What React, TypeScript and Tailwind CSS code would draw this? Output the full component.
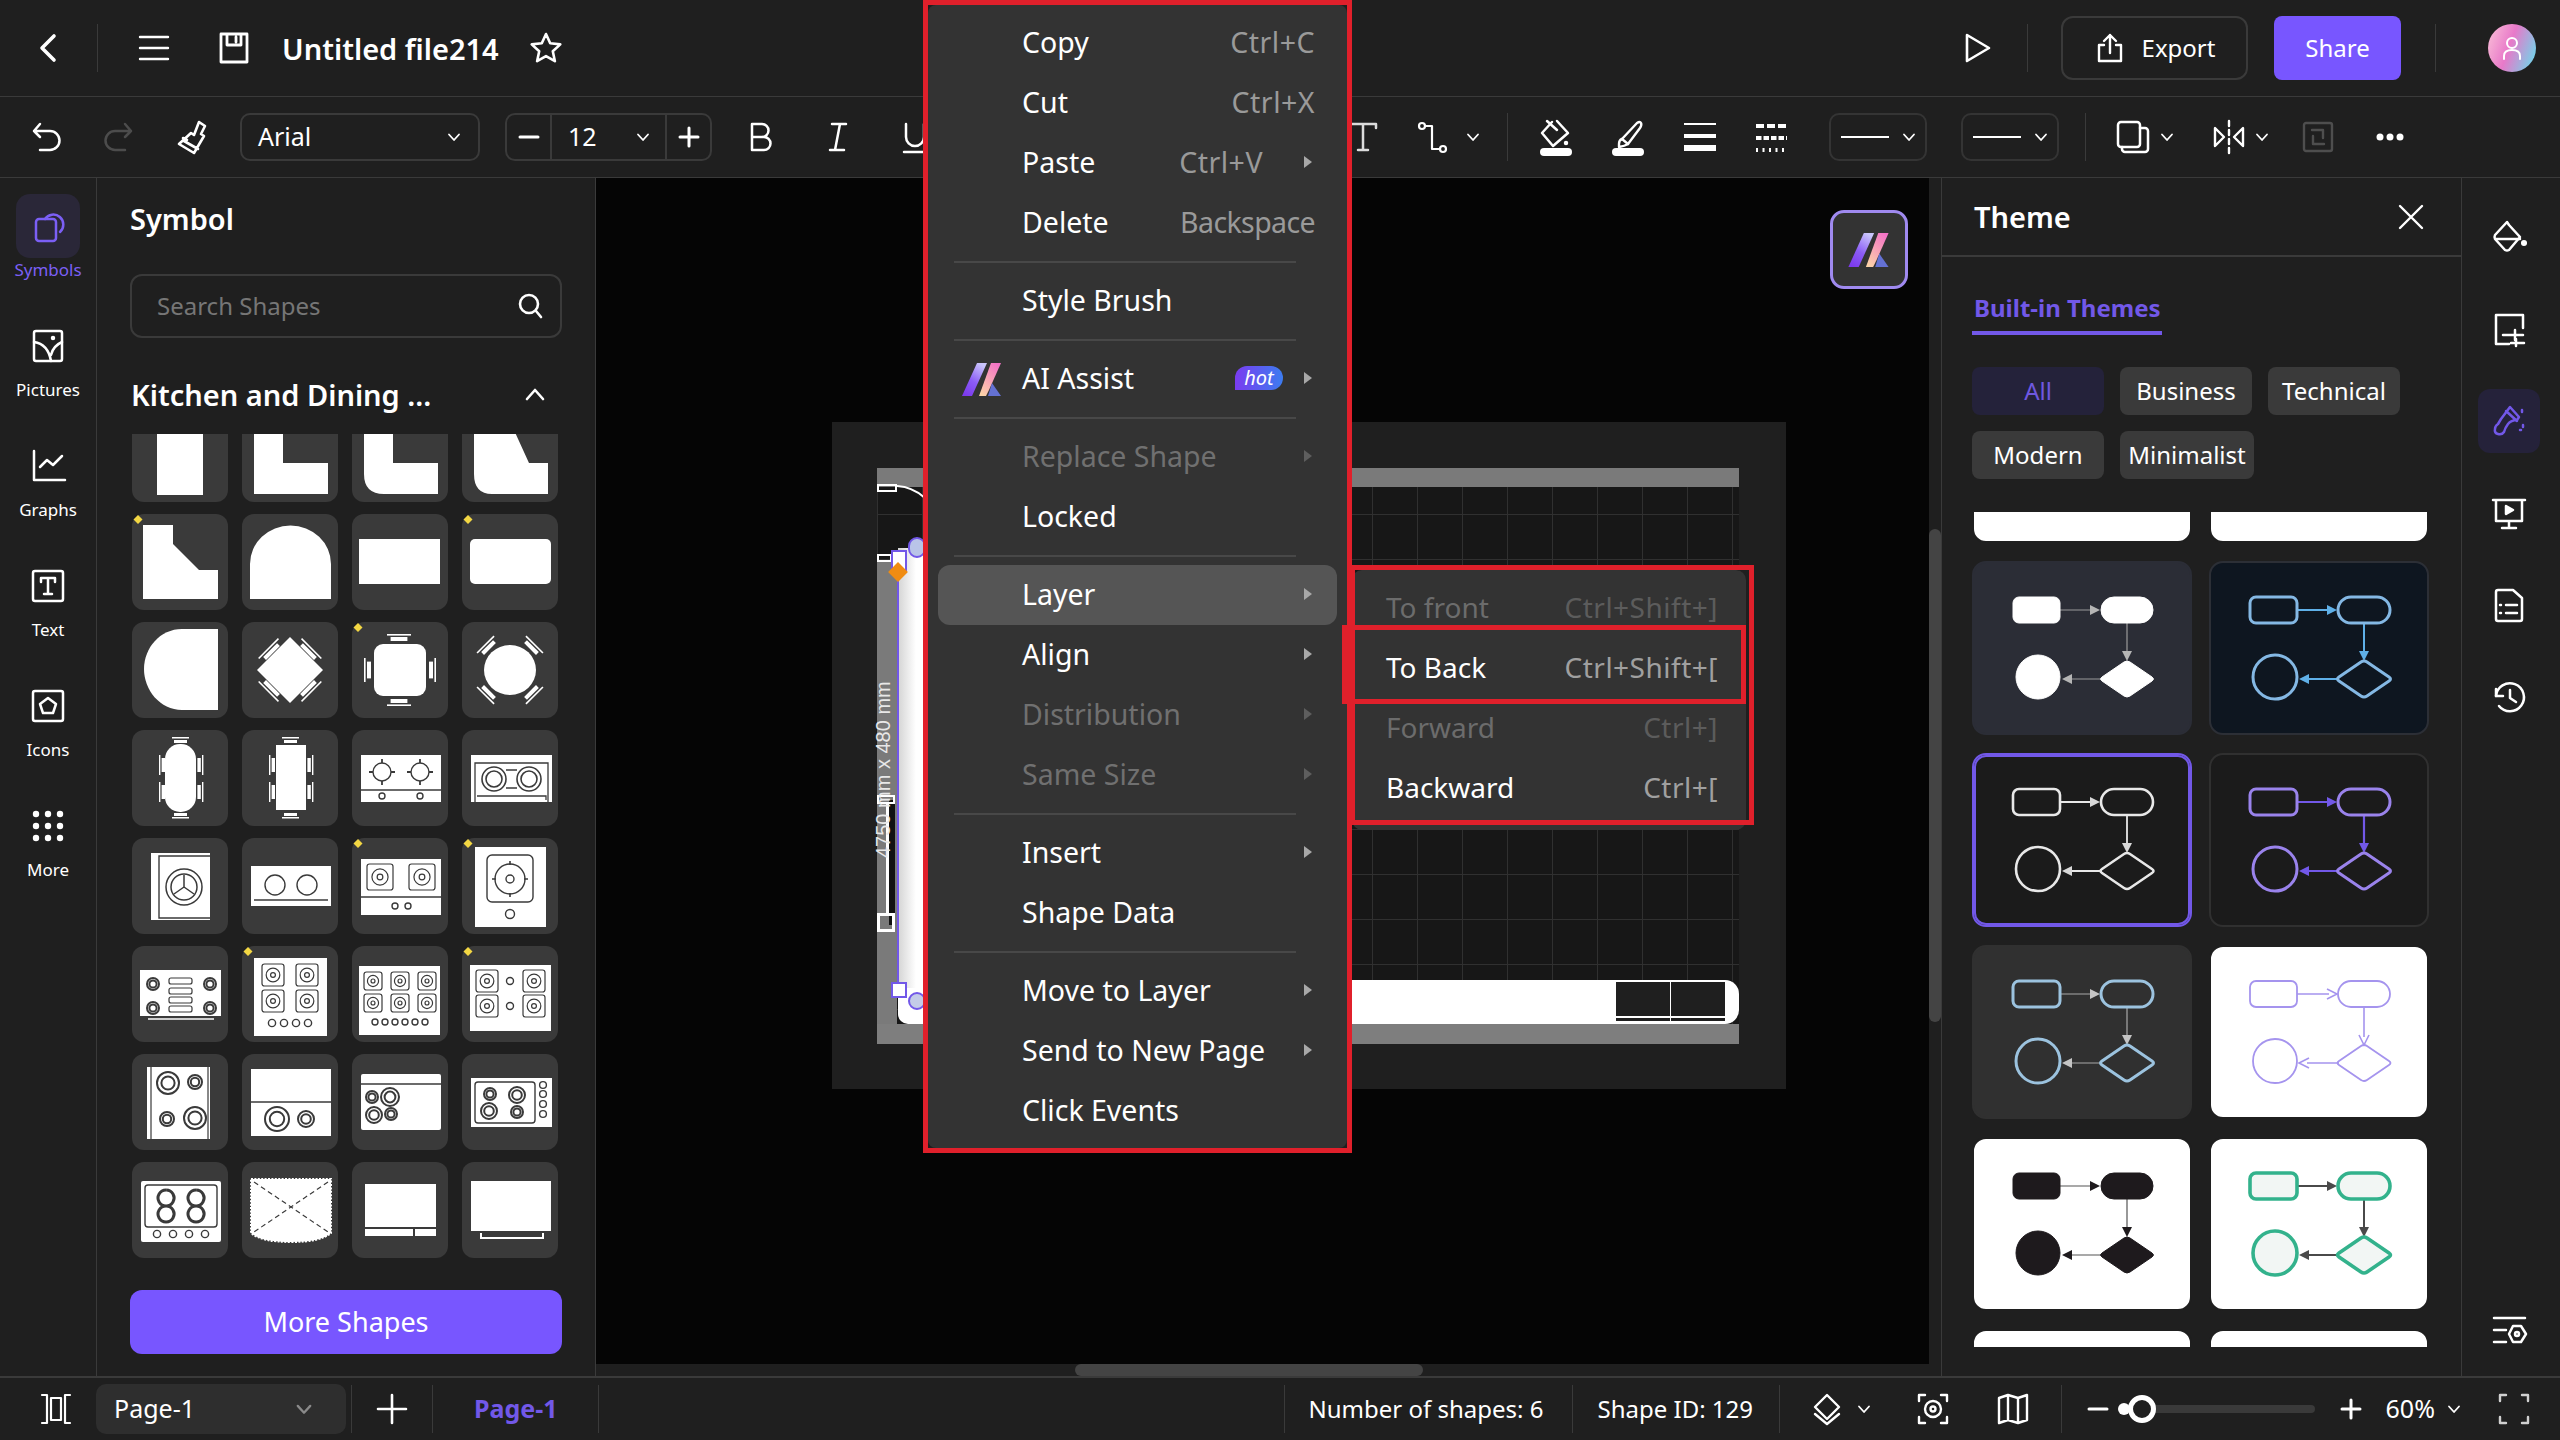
import type { ReactNode } from 'react'

const RED = 'border-[#e0202b]'

function Ico({ size = 36, box = 36, sw = 2.5, className = '', children }: { size?: number; box?: number; sw?: number; className?: string; children: ReactNode }) {
  return (
    <svg width={size} height={size} viewBox={`0 0 ${box} ${box}`} fill="none" stroke="currentColor" strokeWidth={sw} strokeLinecap="round" strokeLinejoin="round" className={`shrink-0 overflow-visible ${className}`}>
      {children}
    </svg>
  )
}

const Chev = ({ className = '', size = 16 }: { className?: string; size?: number }) => (
  <Ico size={size} box={16} sw={1.8} className={className}><path d="M3 5.5 8 11l5-5.5" /></Ico>
)

const Sep = ({ className = '' }: { className?: string }) => <div className={`w-px h-[48px] bg-[#3a3a3a] shrink-0 ${className}`} />

function AiLogo({ w = 40, h = 33, id }: { w?: number; h?: number; id: string }) {
  return (
    <svg width={w} height={h} viewBox="0 0 40 33" className="shrink-0">
      <defs>
        <linearGradient id={`${id}a`} x1="0.7" y1="0" x2="0.2" y2="1"><stop offset="0" stopColor="#c9c4fb" /><stop offset="0.55" stopColor="#8b5cf6" /><stop offset="1" stopColor="#7c3aed" /></linearGradient>
        <linearGradient id={`${id}b`} x1="0.8" y1="0" x2="0.2" y2="1"><stop offset="0" stopColor="#f472c6" /><stop offset="1" stopColor="#fcd2a8" /></linearGradient>
      </defs>
      <path d="M15 0h10L10 33H0z" fill={`url(#${id}a)`} />
      <path d="M29 0h10L27 27l-3 6h-7z" fill={`url(#${id}b)`} />
      <path d="M30 20l9 13H26z" fill="#6d7cf0" opacity="0.85" />
    </svg>
  )
}

/* ---------- shape tiles ---------- */

const D = '#3a3a3a'

const Ring = ({ x, y, r, sw = 1.4, inner }: { x: number; y: number; r: number; sw?: number; inner?: number }) => (
  <g fill="none" stroke={D} strokeWidth={sw}>
    <circle cx={x} cy={y} r={r} />
    {inner ? <circle cx={x} cy={y} r={inner} /> : null}
  </g>
)

const Burner = ({ x, y, s = 11 }: { x: number; y: number; s?: number }) => (
  <g fill="none" stroke={D} strokeWidth={1.2}>
    <rect x={x - s} y={y - s} width={s * 2} height={s * 2} rx={2.5} />
    <circle cx={x} cy={y} r={s * 0.62} />
    <circle cx={x} cy={y} r={s * 0.22} />
  </g>
)

const Chair = ({ x, y, a, l = 12 }: { x: number; y: number; a: number; l?: number }) => (
  <g transform={`rotate(${a} ${x} ${y})`} fill="#fff">
    <rect x={x - l} y={y} width={l * 2} height={1.6} />
    <rect x={x - l * 0.7} y={y + 3} width={l * 1.4} height={4} />
  </g>
)

const Side = ({ x, y, dir }: { x: number; y: number; dir: 1 | -1 }) => (
  <g fill="#fff">
    <rect x={x} y={y - 10} width={1.4} height={20} />
    <rect x={dir > 0 ? x + 2.6 : x - 4.6} y={y - 7} width={3.4} height={14} />
  </g>
)

const Pair = ({ x, y, s = 8 }: { x: number; y: number; s?: number }) => <Ring x={x} y={y} r={s} sw={2} inner={s * 0.6} />

const TILES: { yellow?: boolean; art: ReactNode }[] = [
  { art: <rect x={25} y={0} width={46} height={89} fill="#fff" /> },
  { art: <path d="M12 0h29v57h45v31H12z" fill="#fff" /> },
  { art: <path d="M12 0h29v57h45v31H32Q12 88 12 68z" fill="#fff" /> },
  { art: <path d="M12 0h29l26 57h19v31H30Q12 88 12 68z" fill="#fff" /> },

  { yellow: true, art: <path d="M11 11h30v19l26 26h19v29H11z" fill="#fff" /> },
  { art: <path d="M8 85V50a40 38 0 0 1 81 0v35z" fill="#fff" /> },
  { art: <rect x={7} y={25} width={81} height={45} fill="#fff" /> },
  { yellow: true, art: <rect x={8} y={25} width={81} height={45} rx={5} fill="#fff" /> },

  { art: <path d="M86 7v81H50C28 88 12 68 12 47S28 7 50 7z" fill="#fff" /> },
  {
    art: (
      <g>
        <path d="M48 15l33 33-33 33-33-33z" fill="#fff" />
        <Chair x={26} y={26} a={-45} l={14} />
        <Chair x={70} y={26} a={45} l={14} />
        <Chair x={70} y={70} a={135} l={14} />
        <Chair x={26} y={70} a={225} l={14} />
      </g>
    ),
  },
  {
    yellow: true,
    art: (
      <g>
        <rect x={22} y={22} width={52} height={52} rx={9} fill="#fff" />
        <Chair x={47} y={12} a={0} />
        <Chair x={47} y={84} a={180} />
        <Chair x={12} y={48} a={-90} />
        <Chair x={84} y={48} a={90} />
      </g>
    ),
  },
  {
    art: (
      <g>
        <ellipse cx={48} cy={48} rx={26} ry={25} fill="#fff" />
        <Chair x={23} y={22} a={-45} />
        <Chair x={73} y={22} a={45} />
        <Chair x={73} y={74} a={135} />
        <Chair x={23} y={74} a={225} />
      </g>
    ),
  },

  {
    art: (
      <g>
        <rect x={33} y={14} width={31} height={68} rx={15} fill="#fff" />
        <rect x={40} y={7} width={17} height={1.5} fill="#fff" /><rect x={42} y={10} width={13} height={3} fill="#fff" />
        <rect x={40} y={87} width={17} height={1.5} fill="#fff" /><rect x={42} y={83} width={13} height={3} fill="#fff" />
        <Side x={27} y={35} dir={1} /><Side x={27} y={62} dir={1} />
        <Side x={70} y={35} dir={-1} /><Side x={70} y={62} dir={-1} />
      </g>
    ),
  },
  {
    art: (
      <g>
        <rect x={34} y={15} width={30} height={65} fill="#fff" />
        <rect x={40} y={7} width={17} height={1.5} fill="#fff" /><rect x={42} y={10} width={13} height={3} fill="#fff" />
        <rect x={40} y={87} width={17} height={1.5} fill="#fff" /><rect x={42} y={83} width={13} height={3} fill="#fff" />
        <Side x={27} y={35} dir={1} /><Side x={27} y={62} dir={1} />
        <Side x={70} y={35} dir={-1} /><Side x={70} y={62} dir={-1} />
      </g>
    ),
  },
  {
    art: (
      <g>
        <rect x={9} y={25} width={80} height={47} fill="#fff" />
        <path d="M9 60h80" stroke={D} strokeWidth={1.4} />
        <Ring x={30} y={42} r={9} /><Ring x={68} y={42} r={9} />
        <path d="M30 29v4M30 51v4M17 42h4M39 42h4M68 29v4M68 51v4M55 42h4M77 42h4" stroke={D} strokeWidth={1.8} />
        <Ring x={30} y={66} r={3} /><Ring x={68} y={66} r={3} />
      </g>
    ),
  },
  {
    art: (
      <g>
        <rect x={9} y={25} width={81} height={47} fill="#fff" />
        <path d="M13 72V33h73v39M15 66h69v4" fill="none" stroke={D} strokeWidth={1.3} />
        <Ring x={32} y={49} r={12} sw={1.6} inner={8} /><Ring x={67} y={49} r={12} sw={1.6} inner={8} />
        <path d="M44 40h11M44 58h11" stroke={D} strokeWidth={1.3} />
      </g>
    ),
  },

  {
    art: (
      <g>
        <rect x={19} y={15} width={59} height={67} fill="#fff" />
        <path d="M78 18H27v62h51" fill="none" stroke={D} strokeWidth={1.4} />
        <Ring x={52} y={49} r={18} sw={1.5} inner={13} />
        <path d="M52 49v-12M52 49l-10 7M52 49l10 7" stroke={D} strokeWidth={1.5} />
      </g>
    ),
  },
  {
    art: (
      <g>
        <rect x={9} y={28} width={80} height={40} fill="#fff" />
        <Ring x={33} y={47} r={10} /><Ring x={65} y={47} r={10} />
        <path d="M12 62h74" stroke={D} strokeWidth={1.4} />
      </g>
    ),
  },
  {
    yellow: true,
    art: (
      <g>
        <rect x={9} y={21} width={80} height={56} fill="#fff" />
        <Burner x={28} y={39} s={13} /><Burner x={70} y={39} s={13} />
        <path d="M9 59h80" stroke={D} strokeWidth={1.4} />
        <Ring x={43} y={68} r={3} /><Ring x={56} y={68} r={3} />
      </g>
    ),
  },
  {
    yellow: true,
    art: (
      <g>
        <rect x={13} y={9} width={71} height={80} fill="#fff" />
        <rect x={25} y={17} width={46} height={47} rx={5} fill="none" stroke={D} strokeWidth={1.4} />
        <Ring x={48} y={41} r={15} /><Ring x={48} y={41} r={4} />
        <path d="M48 23v4M48 55v4M30 41h4M62 41h4" stroke={D} strokeWidth={1.6} />
        <Ring x={48} y={76} r={4.5} />
      </g>
    ),
  },

  {
    art: (
      <g>
        <rect x={8} y={24} width={81} height={46} fill="#fff" />
        <path d="M16 73h66" stroke="#fff" strokeWidth={1.4} />
        <Pair x={21} y={38} s={6} /><Pair x={78} y={38} s={6} /><Pair x={21} y={62} s={6} /><Pair x={78} y={62} s={6} />
        <g fill="none" stroke={D} strokeWidth={1.2}>
          <rect x={37} y={32} width={23} height={6} rx={2} /><rect x={37} y={42} width={23} height={6} rx={2} /><rect x={37} y={51} width={23} height={6} rx={2} /><rect x={37} y={60} width={23} height={6} rx={2} />
        </g>
      </g>
    ),
  },
  {
    yellow: true,
    art: (
      <g>
        <rect x={12} y={12} width={73} height={78} fill="#fff" />
        <Burner x={31} y={29} /><Burner x={65} y={29} /><Burner x={31} y={55} /><Burner x={65} y={55} />
        <Ring x={30} y={77} r={3.6} /><Ring x={42} y={77} r={3.6} /><Ring x={54} y={77} r={3.6} /><Ring x={66} y={77} r={3.6} />
      </g>
    ),
  },
  {
    art: (
      <g>
        <rect x={7} y={20} width={81} height={69} fill="#fff" />
        <Burner x={21} y={35} s={9} /><Burner x={48} y={35} s={9} /><Burner x={75} y={35} s={9} />
        <Burner x={21} y={57} s={9} /><Burner x={48} y={57} s={9} /><Burner x={75} y={57} s={9} />
        {[23, 33, 43, 53, 63, 73].map(x => <Ring key={x} x={x} y={76} r={3} />)}
      </g>
    ),
  },
  {
    yellow: true,
    art: (
      <g>
        <rect x={8} y={19} width={81} height={66} fill="#fff" />
        <Burner x={25} y={35} /><Burner x={72} y={35} /><Burner x={25} y={60} /><Burner x={72} y={60} />
        <Ring x={48} y={35} r={3.5} /><Ring x={48} y={60} r={3.5} />
      </g>
    ),
  },

  {
    art: (
      <g>
        <rect x={15} y={13} width={63} height={72} fill="#fff" />
        <path d="M19 13v72M76 13v72" stroke={D} strokeWidth={1.2} />
        <Pair x={36} y={29} s={11} /><Pair x={63} y={28} s={7} /><Pair x={35} y={65} s={7} /><Pair x={63} y={64} s={11} />
      </g>
    ),
  },
  {
    art: (
      <g>
        <rect x={9} y={15} width={80} height={67} fill="#fff" />
        <path d="M9 48h80" stroke={D} strokeWidth={1.5} />
        <Pair x={35} y={65} s={12} /><Pair x={64} y={65} s={8} />
      </g>
    ),
  },
  {
    art: (
      <g>
        <rect x={9} y={20} width={80} height={56} rx={2} fill="#fff" />
        <path d="M9 30h80" stroke={D} strokeWidth={1.5} />
        <Pair x={20} y={43} s={6} /><Pair x={38} y={43} s={9} /><Pair x={22} y={61} s={8} /><Pair x={39} y={60} s={6} />
      </g>
    ),
  },
  {
    art: (
      <g>
        <rect x={9} y={24} width={81} height={49} fill="#fff" />
        <rect x={13} y={28} width={60} height={41} rx={3} fill="none" stroke={D} strokeWidth={1.4} />
        <Pair x={28} y={40} s={6} /><Pair x={55} y={41} s={8} /><Pair x={27} y={57} s={8} /><Pair x={55} y={58} s={6} />
        {[33, 42, 52, 62].map(y => <Ring key={y} x={81} y={y - 2} r={3.4} />)}
      </g>
    ),
  },

  {
    art: (
      <g>
        <rect x={9} y={19} width={80} height={61} rx={2} fill="#fff" />
        <rect x={13} y={23} width={72} height={42} rx={3} fill="none" stroke={D} strokeWidth={1.4} />
        <path d="M34 28a8 8 0 1 0 .1 0M34 44a8 8 0 1 0 .1 0M64 28a8 8 0 1 0 .1 0M64 44a8 8 0 1 0 .1 0" fill="none" stroke={D} strokeWidth={3} />
        {[25, 41, 57, 73].map(x => <Ring key={x} x={x} y={72} r={3.6} />)}
      </g>
    ),
  },
  {
    art: (
      <g>
        <path d="M9 17h80v54q-10 9-40 9t-40-9z" fill="#fff" stroke="#fff" strokeDasharray="2 1.4" strokeWidth={2} />
        <path d="M12 20l74 50M86 20 12 70" stroke={D} strokeWidth={1.2} strokeDasharray="5 3.4" />
      </g>
    ),
  },
  {
    art: (
      <g>
        <rect x={13} y={22} width={71} height={43} fill="#fff" />
        <rect x={13} y={67} width={48} height={7} fill="#fff" />
        <rect x={63} y={67} width={21} height={7} fill="#fff" />
      </g>
    ),
  },
  {
    art: (
      <g>
        <rect x={9} y={19} width={80} height={50} fill="#fff" />
        <path d="M19 71v5h62v-5" fill="none" stroke="#fff" strokeWidth={2} />
      </g>
    ),
  },
]

function Tile({ art, yellow }: { art: ReactNode; yellow?: boolean }) {
  return (
    <div className="w-[96px] h-[96px] rounded-[12px] bg-[#3a3a3a]">
      <svg width={96} height={96} viewBox="0 0 96 96" className="block overflow-visible">
        {art}
        {yellow ? <path d="M6 1l4.5 4.5L6 10 1.500 5.500z" fill="#f3d743" /> : null}
      </svg>
    </div>
  )
}

/* ---------- theme cards ---------- */

type Flow = { bg: string; border: string; stroke: string; fill: string; line: string; head: string; sw: number; lw?: number; open?: boolean }

const THEMES: Flow[] = [
  { bg: 'bg-white', border: 'border-[#1f1f1f]', stroke: 'none', fill: 'none', line: 'none', head: 'none', sw: 0 },
  { bg: 'bg-white', border: 'border-[#1f1f1f]', stroke: 'none', fill: 'none', line: 'none', head: 'none', sw: 0 },
  { bg: 'bg-[#2b2d36]', border: 'border-[#2b2d36]', stroke: '#fff', fill: '#fff', line: '#9a9a9a', head: '#b5b5b5', sw: 1, lw: 1.2 },
  { bg: 'bg-[#0e1620]', border: 'border-[#2c2f36]', stroke: '#84b8e4', fill: 'none', line: '#5fb0e8', head: '#5fb0e8', sw: 3, lw: 2 },
  { bg: 'bg-[#1b1b1b]', border: 'border-[#7258e8] outline-2 outline-[#7258e8] -outline-offset-4', stroke: '#e8e8e8', fill: 'none', line: '#e8e8e8', head: '#d8d8d8', sw: 2.6, lw: 1.8 },
  { bg: 'bg-[#1b1b1b]', border: 'border-[#303030]', stroke: '#9a83ec', fill: 'none', line: '#7258e8', head: '#7258e8', sw: 3, lw: 2.2 },
  { bg: 'bg-[#303030]', border: 'border-[#303030]', stroke: '#9cc3df', fill: 'none', line: '#a8a8a8', head: '#c4c4c4', sw: 3, lw: 1.2 },
  { bg: 'bg-white', border: 'border-[#1f1f1f]', stroke: '#a594ee', fill: 'none', line: '#a594ee', head: '#a594ee', sw: 1.8, lw: 1.6, open: true },
  { bg: 'bg-white', border: 'border-[#1f1f1f]', stroke: '#1e1a1d', fill: '#1e1a1d', line: '#555', head: '#1e1a1d', sw: 1, lw: 1.2 },
  { bg: 'bg-white', border: 'border-[#1f1f1f]', stroke: '#33b28c', fill: '#f2f6f4', line: '#4a4a4a', head: '#4a4a4a', sw: 3.6, lw: 2 },
  { bg: 'bg-white', border: 'border-[#1f1f1f]', stroke: 'none', fill: 'none', line: 'none', head: 'none', sw: 0 },
  { bg: 'bg-white', border: 'border-[#1f1f1f]', stroke: 'none', fill: 'none', line: 'none', head: 'none', sw: 0 },
]

function ThemeCard({ t }: { t: Flow }) {
  const shape = { fill: t.fill, stroke: t.stroke, strokeWidth: t.sw }
  const tip = (p: string) =>
    t.open ? <path d={p} fill="none" stroke={t.head} strokeWidth={1.6} /> : <path d={`${p}z`} fill={t.head} />
  return (
    <div className={`w-[220px] h-[174px] rounded-[14px] border-2 ${t.bg} ${t.border}`}>
      {t.sw > 0 ? (
        <svg width={216} height={170} viewBox="2 2 216 170" className="block">
          <g stroke={t.line} strokeWidth={t.lw} fill="none">
            <path d="M88 49h32M155 62v30M130 118h-32" />
          </g>
          {tip('M118 44l10 5-10 5')}
          {tip('M150 90l5 10 5-10')}
          {tip('M100 113l-10 5 10 5')}
          <rect x={41} y={36} width={47} height={26} rx={6} {...shape} />
          <rect x={129} y={36} width={52} height={26} rx={13} {...shape} />
          <circle cx={66} cy={116} r={22} {...shape} />
          <path d="M152 101q3-2 6 0l22 15q3 2 0 4l-22 15q-3 2-6 0l-22-15q-3-2 0-4z" {...shape} />
        </svg>
      ) : null}
    </div>
  )
}

/* ---------- menu ---------- */

const Arrow = ({ dim }: { dim?: boolean }) => (
  <svg width={8} height={12} viewBox="0 0 8 12" className="shrink-0"><path d="M0 0l8 6-8 6z" fill={dim ? '#5e5e5e' : '#a8a8a8'} /></svg>
)

function Row({ label, keys, arrow, dim, active, children }: { label: string; keys?: string; arrow?: boolean; dim?: boolean; active?: boolean; children?: ReactNode }) {
  return (
    <div className={`h-[60px] mx-[10px] flex items-center rounded-[12px] pl-[84px] pr-[22px] pb-[2px] text-[28.5px] ${active ? 'bg-[#555555]' : ''} ${dim ? 'text-[#707070]' : 'text-white'}`}>
      <span>{label}</span>
      <span className="ml-auto flex items-center">
        {children}
        {keys ? <span className={`text-[#9a9a9a] ${keys.startsWith('Ctrl') ? 'tracking-[0.5px]' : 'tracking-[-0.6px]'}`}>{keys}</span> : null}
        {arrow ? <span className={`flex items-center justify-end h-[30px] pr-[3px] ${keys ? 'w-[52px]' : 'w-[32px]'}`}><Arrow dim={dim} /></span> : null}
      </span>
    </div>
  )
}

const MenuLine = () => (
  <div className="h-[18px] flex items-center ml-[26px] mr-[51px]"><div className="h-[2px] w-full bg-[#484848]" /></div>
)

function SubRow({ label, keys, dim }: { label: string; keys: string; dim?: boolean }) {
  return (
    <div className="h-[60px] flex items-center justify-between pl-[34px] pr-[28px] text-[28px]">
      <span className={dim ? 'text-[#6c6c6c]' : 'text-white'}>{label}</span>
      <span className={`tracking-[0.5px] ${dim ? 'text-[#5c5c5c]' : 'text-[#a0a0a0]'}`}>{keys}</span>
    </div>
  )
}

/* ---------- rails ---------- */

function RailItem({ label, active, children }: { label: string; active?: boolean; children: ReactNode }) {
  return (
    <div className={`h-[120px] flex flex-col items-center ${active ? 'text-[#7b5ff5]' : 'text-white'}`}>
      <div className={`w-[64px] h-[64px] flex items-center justify-center rounded-[14px] ${active ? 'bg-[#2a2738]' : ''}`}>{children}</div>
      <span className="text-[17px] leading-[24px]">{label}</span>
    </div>
  )
}

const Chip = ({ label, active, w }: { label: string; active?: boolean; w: string }) => (
  <div className={`h-[48px] rounded-[8px] flex items-center justify-center text-[24px] ${w} ${active ? 'bg-[#24223a] text-[#6f58e0]' : 'bg-[#3a3a3a] text-white'}`}>{label}</div>
)

const RightIcon = ({ active, children }: { active?: boolean; children: ReactNode }) => (
  <div className={`w-[62px] h-[92px] flex items-center justify-center ${active ? 'text-[#7258e8]' : 'text-white'}`}>
    <div className={`w-[62px] h-[64px] flex items-center justify-center rounded-[12px] ${active ? 'bg-[#25223a]' : ''}`}>{children}</div>
  </div>
)

const LineSelect = ({ className = '' }: { className?: string }) => (
  <div className={`w-[98px] h-[48px] rounded-[10px] border-2 border-[#343434] flex items-center pl-[10px] pr-[8px] shrink-0 ${className}`}>
    <div className="w-[48px] h-[2px] bg-white" />
    <Chev className="ml-auto text-white" />
  </div>
)

export default function App() {
  return (
    <div className="relative w-[2560px] h-[1440px] overflow-hidden bg-[#1f1f1f] text-white font-['Noto_Sans',sans-serif] flex flex-col">

      {/* top bar */}
      <header className="h-[97px] shrink-0 border-b border-[#3a3a3a] flex items-center">
        <div className="w-[97px] flex justify-center">
          <Ico size={40} box={40} sw={3.6}><path d="M25 8 13 20l12 12" /></Ico>
        </div>
        <Sep />
        <Ico size={34} box={34} sw={2.4} className="ml-[39px]"><path d="M3 6h28M3 17h28M3 28h28" /></Ico>
        <Ico size={34} box={34} sw={2.8} className="ml-[46px]">
          <path d="M4 3h26v28H4zM10 3v11h14V3M19 6v5" />
        </Ico>
        <span className="ml-[31px] text-[29px] font-semibold leading-none">Untitled file214</span>
        <Ico size={34} box={34} sw={2.6} className="ml-[30px]">
          <path d="M17 3l4.200 9.300 10.100 1.100-7.500 6.800 2.100 10L17 25.100l-8.900 5.100 2.100-10-7.500-6.800 10.100-1.100z" />
        </Ico>

        <div className="ml-auto flex items-center pr-[24px]">
          <Ico size={32} box={32} sw={2.6}><path d="M5 3l22 13L5 29z" /></Ico>
          <Sep className="ml-[33px]" />
          <button className="ml-[33px] w-[187px] h-[64px] rounded-[12px] border-2 border-[#3a3a3a] flex items-center justify-center gap-[16px] text-[24px]">
            <Ico size={32} box={32} sw={2.4}><path d="M10 13H5v16h22V13h-5M16 21V3M10 9l6-6 6 6" /></Ico>
            Export
          </button>
          <button className="ml-[26px] w-[127px] h-[64px] rounded-[8px] bg-[#7856ff] text-[24px]">Share</button>
          <Sep className="ml-[34px]" />
          <div className="ml-[52px] w-[48px] h-[48px] rounded-full bg-[linear-gradient(110deg,#fbc2d8,#e879c9_45%,#5fe3f0)] flex items-center justify-center">
            <Ico size={28} box={28} sw={2} className="text-white"><circle cx={14} cy={9} r={5} /><path d="M6 25v-3q0-6 8-6t8 6v3" /></Ico>
          </div>
        </div>
      </header>

      {/* format toolbar */}
      <div className="h-[81px] shrink-0 border-b border-[#3a3a3a] flex items-center pl-[29px]">
        <Ico><path d="M11 5 5 12l6 6M5 12h16a9 9 0 0 1 0 19H11" /></Ico>
        <Ico className="ml-[35px] text-[#4c4c4c]"><path d="M25 5l6 7-6 6M31 12H15a9 9 0 0 0 0 19h10" /></Ico>
        <Ico className="ml-[38px]" sw={2.6}>
          <path d="M25 3l6 4-4 8 3 2-10 17-15-9L17 14l3 2zM10 22l14 8M9 19l4 2" />
        </Ico>
        <div className="ml-[30px] w-[240px] h-[48px] rounded-[10px] border-2 border-[#3a3a3a] flex items-center pl-[16px] pr-[16px] text-[25px] shrink-0">
          Arial
          <Chev className="ml-auto" />
        </div>
        <div className="ml-[25px] w-[207px] h-[48px] rounded-[10px] border-2 border-[#3a3a3a] flex items-center text-[25px] shrink-0">
          <div className="w-[45px] h-full flex items-center justify-center border-r-2 border-[#3a3a3a]">
            <Ico size={24} box={24} sw={3}><path d="M3 12h18" /></Ico>
          </div>
          <div className="flex-1 h-full flex items-center pl-[16px] pr-[14px]">12<Chev className="ml-auto" /></div>
          <div className="w-[45px] h-full flex items-center justify-center border-l-2 border-[#3a3a3a]">
            <Ico size={24} box={24} sw={3}><path d="M3 12h18M12 3v18" /></Ico>
          </div>
        </div>
        <Ico className="ml-[30px]"><path d="M10 5h10a6.500 6.500 0 0 1 0 13H10zM10 18h12a6.500 6.500 0 0 1 0 13H10z" /></Ico>
        <Ico className="ml-[42px]"><path d="M12 5h14M10 31h14M20 5l-5 26" /></Ico>
        <Ico className="ml-[41px]"><path d="M9 5v13a9 9 0 0 0 18 0V5M7 33h22" /></Ico>

        <Ico className="ml-[412px] text-[#dcdcdc]"><path d="M5 9V5h26v4M18 5v26M13 31h10" /></Ico>
        <Ico className="ml-[34px]" sw={2.2}><circle cx={7} cy={7} r={3} /><circle cx={28} cy={30} r={3} /><path d="M10 7h7v23h8" /></Ico>
        <Chev className="ml-[14px]" />
        <Sep className="ml-[26px]" />
        <Ico className="ml-[29px]">
          <path d="M20 2l11 12-15 13L5 14 15 3M10 2l10 9" />
          <circle cx={29} cy={24} r={1} fill="currentColor" />
          <rect x={3} y={29} width={32} height={8} rx={4} fill="currentColor" stroke="none" />
        </Ico>
        <Ico className="ml-[37px]" sw={2.4}>
          <path d="M27 4q3-2 4 0t-1 5L18 25l-6-5z" />
          <path d="M12 20q-3 1-3 5v3q6-1 9-3" />
          <rect x={2} y={29} width={32} height={8} rx={4} fill="currentColor" stroke="none" />
        </Ico>
        <svg width={36} height={36} viewBox="0 0 36 36" className="ml-[36px] shrink-0">
          <rect x={2} y={4} width={32} height={2} fill="#fff" />
          <rect x={2} y={15} width={32} height={4} fill="#fff" />
          <rect x={2} y={26} width={32} height={6} fill="#fff" />
        </svg>
        <svg width={36} height={36} viewBox="0 0 36 36" className="ml-[35px] shrink-0">
          <path d="M3 7h31" stroke="#fff" strokeWidth={4} strokeDasharray="8 3" />
          <path d="M3 19h31" stroke="#fff" strokeWidth={4} strokeDasharray="5.500 2" />
          <path d="M3 31h31" stroke="#fff" strokeWidth={4} strokeDasharray="2 4.500" />
        </svg>
        <LineSelect className="ml-[40px]" />
        <LineSelect className="ml-[34px]" />
        <Sep className="ml-[26px]" />
        <Ico className="ml-[30px]"><rect x={2} y={3} width={22} height={25} rx={3} /><path d="M24 9h5a3 3 0 0 1 3 3v18a3 3 0 0 1-3 3H9a3 3 0 0 1-3-3v-2" /></Ico>
        <Chev className="ml-[7px]" />
        <Ico className="ml-[36px]" sw={2.4}>
          <path d="M18 2v5M18 11v5M18 20v5M18 29v5M4 9v18l9-9zM32 9v18l-9-9z" />
        </Ico>
        <Chev className="ml-[7px]" />
        <Ico className="ml-[30px] text-[#4e4e4e]" sw={2.4}>
          <rect x={4} y={4} width={28} height={28} rx={2} />
          <path d="M12 11h11v8M24 25H13v-8" />
        </Ico>
        <svg width={36} height={36} viewBox="0 0 36 36" className="ml-[36px] shrink-0">
          <circle cx={8} cy={18} r={3.500} fill="#fff" /><circle cx={18} cy={18} r={3.500} fill="#fff" /><circle cx={28} cy={18} r={3.500} fill="#fff" />
        </svg>
      </div>

      {/* workspace */}
      <div className="flex-1 min-h-0 flex">

        {/* left rail */}
        <nav className="w-[97px] shrink-0 border-r border-[#3a3a3a] pt-[16px] flex flex-col items-center">
          <RailItem label="Symbols" active>
            <Ico>
              <rect x={6} y={11} width={20} height={22} rx={3} />
              <path d="M15 11a10 10 0 1 1 15 13" />
            </Ico>
          </RailItem>
          <RailItem label="Pictures">
            <Ico>
              <rect x={4} y={3} width={28} height={30} rx={2} />
              <path d="M4 14q14 2 17 19M32 14q-9 4-11 13" />
              <circle cx={23} cy={10} r={1} fill="currentColor" />
            </Ico>
          </RailItem>
          <RailItem label="Graphs">
            <Ico>
              <path d="M4 3v29h31M10 19l7-7 6 5 9-9" />
            </Ico>
          </RailItem>
          <RailItem label="Text">
            <Ico>
              <rect x={3} y={3} width={30} height={30} rx={2} />
              <path d="M11 14v-4h14v4M18 10v16M14 26h8" />
            </Ico>
          </RailItem>
          <RailItem label="Icons">
            <Ico>
              <rect x={3} y={3} width={30} height={30} rx={2} />
              <path d="M18 10l8 6-3 9H13l-3-9z" />
            </Ico>
          </RailItem>
          <RailItem label="More">
            <svg width={32} height={32} viewBox="0 0 32 32">
              {[4, 16, 28].flatMap(y => [4, 16, 28].map(x => <circle key={`${x}${y}`} cx={x} cy={y} r={3.200} fill="#fff" />))}
            </svg>
          </RailItem>
        </nav>

        {/* symbol panel */}
        <aside className="w-[499px] shrink-0 border-r border-[#3a3a3a] flex flex-col">
          <div className="h-[82px] pl-[33px] flex items-center text-[29px] font-semibold shrink-0">Symbol</div>
          <div className="ml-[33px] mt-[14px] w-[432px] h-[64px] shrink-0 rounded-[12px] border-2 border-[#3a3a3a] flex items-center pl-[25px] pr-[16px] text-[24px] text-[#767676]">
            Search Shapes
            <Ico size={28} box={28} sw={2.6} className="ml-auto text-white"><circle cx={13} cy={12} r={9} /><path d="M20 19l5 6" /></Ico>
          </div>
          <div className="h-[96px] shrink-0 ml-[34px] mr-[38px] pt-[18px] flex items-center justify-between text-[29px] font-semibold">
            <span>Kitchen and Dining ...</span>
            <Ico size={24} box={24} sw={2.6} className="mr-[10px]"><path d="M4 16l8-9 8 9" /></Ico>
          </div>
          <div className="h-[836px] shrink-0 overflow-hidden pl-[35px]">
            <div className="grid grid-cols-[repeat(4,96px)] gap-x-[14px] gap-y-[12px] -mt-[28px]">
              {TILES.map((t, i) => <Tile key={i} art={t.art} yellow={t.yellow} />)}
            </div>
          </div>
          <button className="ml-[33px] mt-[20px] w-[432px] h-[64px] shrink-0 rounded-[12px] bg-[#7856ff] text-[27px]">More Shapes</button>
        </aside>

        {/* canvas */}
        <main className="w-[1333px] shrink-0 relative bg-[#050505]">
          <div className="absolute left-[236px] top-[244px] w-[954px] h-[667px] bg-[#1f1f1f]">
            <div className="absolute left-[45px] top-[47px] w-[862px] h-[575px] bg-[#171717] bg-[linear-gradient(#303030_1px,transparent_1px),linear-gradient(90deg,#303030_1px,transparent_1px)] bg-[size:45px_45px]" />
            <div className="absolute left-[45px] top-[46px] w-[862px] h-[19px] bg-[#7a7a7a]" />
            <div className="absolute left-[45px] top-[140px] w-[20px] h-[482px] bg-[#7a7a7a]" />
            <div className="absolute left-[45px] top-[602px] w-[862px] h-[20px] bg-[#7e7e7e]" />
            <div className="absolute left-[66px] top-[558px] w-[841px] h-[44px] bg-white rounded-r-[14px] rounded-bl-[10px]">
              <div className="absolute left-[718px] top-[2px] w-[54px] h-[34px] bg-[#1f1f1f]" />
              <div className="absolute left-[773px] top-[2px] w-[54px] h-[34px] bg-[#1f1f1f]" />
              <div className="absolute left-[718px] top-[38px] w-[54px] h-[3px] bg-[#1f1f1f]" />
              <div className="absolute left-[773px] top-[38px] w-[54px] h-[3px] bg-[#1f1f1f]" />
            </div>
            <div className="absolute left-[66px] top-[126px] w-[30px] h-[440px] bg-[linear-gradient(90deg,#d4d4d4,#ffffff_60%)]" />
            {/* door arc and wall ends */}
            <svg width={28} height={16} viewBox="0 0 28 16" className="absolute left-[65px] top-[62px]">
              <path d="M0 2q16 1 28 12" fill="none" stroke="#fff" strokeWidth={2} />
            </svg>
            <div className="absolute left-[45px] top-[62px] w-[20px] h-[8px] border-2 border-white" />
            <div className="absolute left-[45px] top-[132px] w-[15px] h-[8px] border-2 border-white" />
            {/* selection */}
            <div className="absolute left-[65px] top-[149px] w-[2px] h-[412px] bg-[#7258e8]" />
            <div className="absolute left-[76px] top-[115px] w-[18px] h-[21px] rounded-full bg-[#b9c4e8] border-2 border-[#7258e8]" />
            <div className="absolute left-[76px] top-[570px] w-[18px] h-[18px] rounded-full bg-[#c4cce8] border-2 border-[#7258e8]" />
            <div className="absolute left-[59px] top-[128px] w-[16px] h-[21px] bg-white border-2 border-[#7258e8]" />
            <div className="absolute left-[59px] top-[560px] w-[16px] h-[16px] bg-white border-2 border-[#7258e8]" />
            <div className="absolute left-[59px] top-[143px] w-[14px] h-[14px] rotate-45 bg-[#f08c12]" />
            {/* dimension line */}
            <div className="absolute left-[57px] top-[378px] w-[6px] h-[125px] bg-[#111111]" />
            <div className="absolute left-[54px] top-[382px] w-[3px] h-[110px] bg-white" />
            <div className="absolute left-[45px] top-[373px] w-[18px] h-[9px] border-2 border-white" />
            <div className="absolute left-[45px] top-[491px] w-[18px] h-[19px] border-[3px] border-white" />
            <div className="absolute left-[39px] top-[175px] h-[261px] w-[24px] flex items-center justify-start [writing-mode:vertical-rl] rotate-180 text-[20px] text-[#e8e8e8] font-['Liberation_Sans',sans-serif] whitespace-nowrap">4750 mm x 480 mm</div>
          </div>

          <div className="absolute left-[1234px] top-[32px] w-[78px] h-[79px] rounded-[14px] bg-[#333333] border-[3px] border-[#a08af0] flex items-center justify-center">
            <AiLogo w={42} h={34} id="fab" />
          </div>

          <div className="absolute left-0 right-0 bottom-0 h-[12px] bg-[#1f1f1f]">
            <div className="absolute left-[479px] top-0 w-[348px] h-[12px] rounded-full bg-[#444444]" />
          </div>
        </main>

        {/* canvas vertical scrollbar */}
        <div className="w-[12px] shrink-0 relative bg-[#1f1f1f]">
          <div className="absolute top-[351px] left-0 w-[12px] h-[493px] rounded-full bg-[#444444]" />
        </div>

        {/* theme panel */}
        <aside className="w-[521px] shrink-0 border-x border-[#3a3a3a] flex flex-col">
          <div className="h-[79px] shrink-0 border-b-2 border-[#3a3a3a] flex items-center justify-between pl-[32px] pr-[36px] text-[29px] font-semibold">
            Theme
            <Ico size={28} box={28} sw={2.4}><path d="M3 3l22 22M25 3 3 25" /></Ico>
          </div>
          <div className="ml-[30px] mt-[31px] w-[190px] h-[47px] shrink-0 border-b-4 border-[#7258e8] text-[24px] font-bold text-[#7258e8] pl-[2px] leading-[40px] whitespace-nowrap">Built-in Themes</div>
          <div className="ml-[30px] mt-[32px] shrink-0 grid grid-cols-[132px_132px_132px] gap-x-[16px] gap-y-[16px] w-[428px]">
            <Chip label="All" active w="w-[132px]" />
            <Chip label="Business" w="w-[132px]" />
            <Chip label="Technical" w="w-[132px]" />
            <Chip label="Modern" w="w-[132px]" />
            <Chip label="Minimalist" w="w-[134px]" />
          </div>
          <div className="mt-[33px] h-[835px] shrink-0 overflow-hidden pl-[30px]">
            <div className="grid grid-cols-[220px_220px] gap-x-[17px] gap-y-[18px] -mt-[143px]">
              {THEMES.map((t, i) => <ThemeCard key={i} t={t} />)}
            </div>
          </div>
        </aside>

        {/* right rail */}
        <nav className="flex-1 min-w-0 pt-[13px] pr-[4px] flex flex-col items-center">
          <RightIcon>
            <Ico>
              <path d="M16 3l2 3 11 12-11 13q-2 1-4 0L4 20q-1-2 0-4z" />
              <path d="M5 20h24" />
              <circle cx={33} cy={24} r={1.800} fill="currentColor" />
            </Ico>
          </RightIcon>
          <RightIcon>
            <Ico>
              <path d="M18 33H5V4h27v13M32 24h-20M24 19v10M33 32H20M25 28v7" />
            </Ico>
          </RightIcon>
          <RightIcon active>
            <Ico>
              <path d="M19 4l9 10-2 3q-6 0-9 4t-4 8q-2 3-6 2t-3-5q0-3 3-5l3-5z" />
              <path d="M15 8l11 10" />
              <path d="M31 7v2M32 22v2M29 27h1" />
            </Ico>
          </RightIcon>
          <RightIcon>
            <Ico>
              <path d="M2 5h32M5 5v21h26V5M18 26v6M11 33h14" />
              <path d="M15 11l7 4-7 4z" fill="currentColor" />
            </Ico>
          </RightIcon>
          <RightIcon>
            <Ico>
              <path d="M22 3H7a2 2 0 0 0-2 2v27a2 2 0 0 0 2 2h22a2 2 0 0 0 2-2V11zM15 18h11M15 26h11" />
              <path d="M9 18h1M9 26h1" />
            </Ico>
          </RightIcon>
          <RightIcon>
            <Ico>
              <path d="M5 10v7h7" />
              <path d="M5 17A14 14 0 1 1 8 27" />
              <path d="M19 11v8l6 4" />
            </Ico>
          </RightIcon>
          <div className="mt-auto mb-[27px]">
            <Ico>
              <path d="M3 5h31M3 17h12M3 29h12" />
              <path d="M22 13h8l5 8-5 8h-8l-4-8z" />
              <circle cx={26} cy={21} r={2} />
            </Ico>
          </div>
        </nav>
      </div>

      {/* status bar */}
      <footer className="h-[64px] shrink-0 border-t-2 border-[#3a3a3a] flex items-center pl-[40px]">
        <Ico size={32} box={32} sw={2.2}><path d="M2 2h5v28H2M30 2h-5v28h5M11 5h10v22H11z" /></Ico>
        <div className="ml-[24px] w-[250px] h-[50px] rounded-[10px] bg-[#2e2e2e] flex items-center pl-[18px] pr-[32px] text-[25px]">
          Page-1
          <Chev className="ml-auto text-[#8a8a8a]" size={20} />
        </div>
        <Sep className="ml-[5px]" />
        <Ico size={32} box={32} sw={2.6} className="ml-[24px]"><path d="M2 16h28M16 2v28" /></Ico>
        <Sep className="ml-[24px]" />
        <span className="ml-[41px] text-[25px] font-bold text-[#7258e8]">Page-1</span>
        <Sep className="ml-[40px]" />
        <Sep className="ml-[685px]" />
        <span className="ml-[24px] text-[24px] w-[238px] whitespace-nowrap">Number of shapes: 6</span>
        <Sep className="ml-[25px]" />
        <span className="ml-[25px] text-[24px] w-[156px] whitespace-nowrap">Shape ID: 129</span>
        <Sep className="ml-[25px]" />
        <Ico size={32} box={32} sw={2.4} className="ml-[31px]"><path d="M16 2l12 12-12 12L4 14zM4 21l12 10 12-10" /></Ico>
        <Chev className="ml-[13px]" />
        <Ico size={32} box={32} sw={2.4} className="ml-[45px]"><path d="M2 8V2h6M24 2h6v6M30 24v6h-6M8 30H2v-6" /><circle cx={16} cy={16} r={8} /><circle cx={16} cy={16} r={2.500} /></Ico>
        <Ico size={32} box={32} sw={2.4} className="ml-[48px]"><path d="M2 5l9-3 10 3 9-3v25l-9 3-10-3-9 3zM11 2v25M21 5v25" /></Ico>
        <Sep className="ml-[32px]" />
        <Ico size={24} box={24} sw={3} className="ml-[24px]"><path d="M3 12h18" /></Ico>
        <div className="ml-[12px] relative w-[193px] h-[8px] rounded-full bg-[#3a3a3a]">
          <div className="absolute left-[-4px] top-[-2px] w-[12px] h-[12px] rounded-full bg-white" />
          <div className="absolute left-[6px] top-[-10px] w-[28px] h-[28px] rounded-full bg-[#1f1f1f] border-[5px] border-white" />
        </div>
        <Ico size={24} box={24} sw={3} className="ml-[24px]"><path d="M3 12h18M12 3v18" /></Ico>
        <span className="ml-[23px] text-[25px] w-[52px] whitespace-nowrap">60%</span>
        <Chev className="ml-[8px]" />
        <Ico size={32} box={32} sw={2.4} className="ml-[36px] text-[#d0d0d0]"><path d="M2 8V2h6M24 2h6v6M30 24v6h-6M8 30H2v-6" /></Ico>
      </footer>

      {/* context menu */}
      <div className={`absolute left-[923px] top-0 w-[429px] h-[1153px] border-[5px] ${RED} bg-[#1f1f1f]`}>
        <div className="w-full h-full rounded-[8px] bg-[#333333] pt-[8px]">
          <Row label="Copy" keys="Ctrl+C" />
          <Row label="Cut" keys="Ctrl+X" />
          <Row label="Paste" keys="Ctrl+V" arrow />
          <Row label="Delete" keys="Backspace" />
          <MenuLine />
          <Row label="Style Brush" />
          <MenuLine />
          <div className="relative">
            <div className="absolute left-[34px] top-[14px]"><AiLogo id="menu" /></div>
            <Row label="AI Assist" arrow>
              <span className="w-[48px] h-[24px] rounded-full rounded-bl-[3px] bg-[linear-gradient(90deg,#7a3cf0,#3c7cf0)] flex items-center justify-center text-[20px] italic leading-none">hot</span>
            </Row>
          </div>
          <MenuLine />
          <Row label="Replace Shape" arrow dim />
          <Row label="Locked" />
          <MenuLine />
          <Row label="Layer" arrow active />
          <Row label="Align" arrow />
          <Row label="Distribution" arrow dim />
          <Row label="Same Size" arrow dim />
          <MenuLine />
          <Row label="Insert" arrow />
          <Row label="Shape Data" />
          <MenuLine />
          <Row label="Move to Layer" arrow />
          <Row label="Send to New Page" arrow />
          <Row label="Click Events" />
        </div>
      </div>

      {/* layer submenu */}
      <div className="absolute left-[1352px] top-[570px] w-[394px] h-[260px] rounded-[10px] bg-[#333333] pt-[7px]">
        <SubRow label="To front" keys="Ctrl+Shift+]" dim />
        <SubRow label="To Back" keys="Ctrl+Shift+[" />
        <SubRow label="Forward" keys="Ctrl+]" dim />
        <SubRow label="Backward" keys="Ctrl+[" />
      </div>
      <div className={`absolute left-[1350px] top-[565px] w-[404px] h-[260px] border-[5px] ${RED}`} />
      <div className={`absolute left-[1342px] top-[625px] w-[404px] h-[79px] border-[5px] ${RED}`} />
    </div>
  )
}
